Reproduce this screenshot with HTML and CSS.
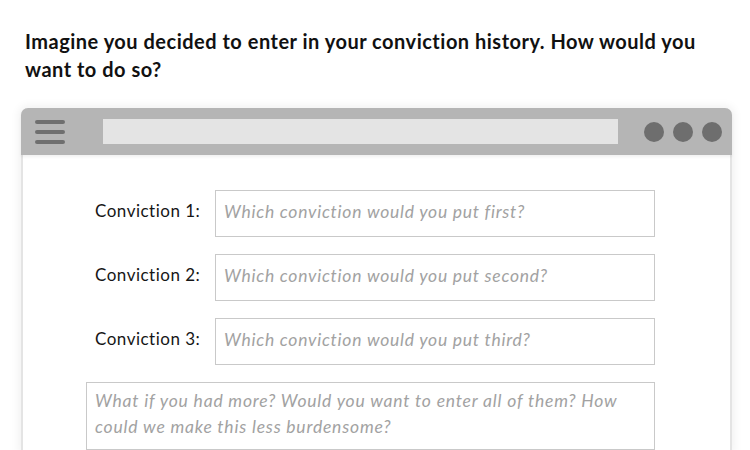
FILE: index.html
```html
<!DOCTYPE html>
<html lang="en">
<head>
<meta charset="utf-8">
<title>Conviction history</title>
<link rel="stylesheet" href="styles.css">
</head>
<body>
<h1 class="question">Imagine you decided to enter in your conviction history. How would you want to do so?</h1>
<div class="window">
  <div class="titlebar">
    <div class="menu"><span></span><span></span><span></span></div>
    <div class="address"></div>
    <div class="dots"><span></span><span></span><span></span></div>
  </div>
  <div class="content">
    <div class="row">
      <div class="label">Conviction 1:</div>
      <div class="field">Which conviction would you put first?</div>
    </div>
    <div class="row">
      <div class="label">Conviction 2:</div>
      <div class="field">Which conviction would you put second?</div>
    </div>
    <div class="row">
      <div class="label">Conviction 3:</div>
      <div class="field">Which conviction would you put third?</div>
    </div>
    <div class="area">What if you had more? Would you want to enter all of them? How could we make this less burdensome?</div>
  </div>
</div>
</body>
</html>
```
FILE: styles.css
```css
html, body {
  margin: 0;
  padding: 0;
  background: #ffffff;
}
body {
  font-family: "Lato", "Open Sans", sans-serif;
  color: #151515;
}
.question {
  margin: 0;
  padding: 27px 40px 0 25px;
  font-size: 20px;
  line-height: 28px;
  font-weight: 700;
  letter-spacing: 0.5px;
  color: #111111;
}
.window {
  margin: 25px 18px 0 21px;
  border: 2px solid #e4e4e4;
  border-top: none;
  border-bottom: none;
  border-radius: 7px 7px 0 0;
  box-shadow: 0 0 8px 3px rgba(0, 0, 0, 0.05);
  height: 342px;
  box-sizing: border-box;
}
.titlebar {
  height: 47px;
  background: #b5b5b5;
  border-radius: 7px 7px 0 0;
  margin: 0 -2px;
  display: flex;
  align-items: center;
  padding: 0 10px 0 14px;
  box-shadow: 0 2px 3px rgba(0, 0, 0, 0.06);
}
.menu {
  display: flex;
  flex-direction: column;
  gap: 6px;
  width: 30px;
}
.menu span {
  display: block;
  height: 4px;
  border-radius: 2px;
  background: #6f6f6f;
}
.address {
  margin-left: 38px;
  width: 515px;
  height: 25px;
  background: #e4e4e4;
}
.dots {
  display: flex;
  gap: 9px;
  margin-left: auto;
}
.dots span {
  width: 20px;
  height: 20px;
  border-radius: 50%;
  background: #6e6e6e;
}
.content {
  padding: 35px 0 0 63px;
  display: flex;
  flex-direction: column;
  gap: 17px;
}
.row {
  display: flex;
  align-items: center;
  margin-left: 9px;
}
.label {
  width: 120px;
  padding-bottom: 6px;
  font-size: 17px;
  letter-spacing: 0.5px;
  color: #161616;
}
.field {
  width: 440px;
  height: 47px;
  box-sizing: border-box;
  border: 1.5px solid #c9c9c9;
  padding: 0 8px 5px 8px;
  display: flex;
  align-items: center;
  font-size: 17.5px;
  letter-spacing: 0.75px;
  font-style: italic;
  color: #a2a2a2;
}
.area {
  width: 569px;
  height: 68px;
  box-sizing: border-box;
  border: 1.5px solid #c9c9c9;
  padding: 5px 8px 0 8px;
  font-size: 17.5px;
  line-height: 26px;
  letter-spacing: 0.8px;
  font-style: italic;
  color: #a2a2a2;
}
```
